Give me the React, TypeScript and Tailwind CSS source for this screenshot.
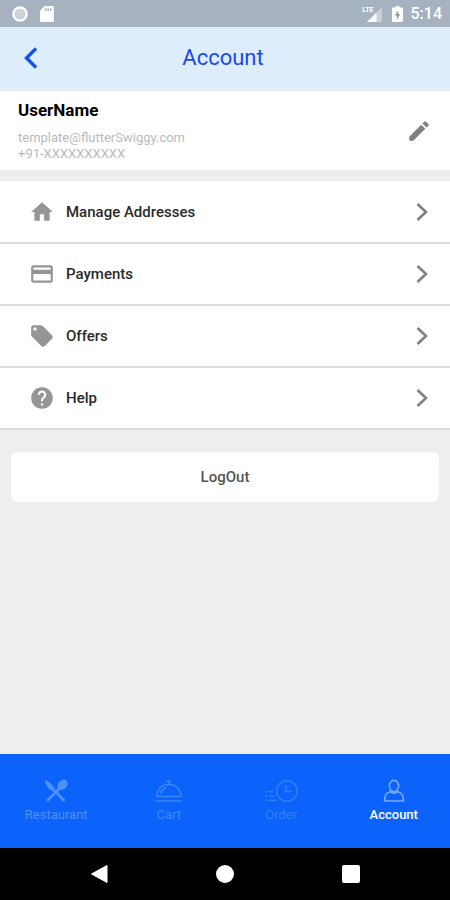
import type { ReactNode } from "react";
import {
    MdCreditCard,
    MdEdit,
    MdHelp,
    MdHome,
    MdLocalOffer,
} from "react-icons/md";

const menuItems = [
    { label: "Manage Addresses", icon: MdHome },
    { label: "Payments", icon: MdCreditCard },
    { label: "Offers", icon: MdLocalOffer },
    { label: "Help", icon: MdHelp },
];

function StatusBar() {
    return (
        <div className="flex h-[27px] items-center justify-between bg-[#a6b2bf] pr-2 pl-3 text-white">
            <div className="flex items-center gap-3">
                <svg className="size-4" viewBox="0 0 16 16" aria-hidden="true">
                    <circle cx="8" cy="8" r="5" fill="#cdd3da" />
                    <circle
                        cx="8"
                        cy="8"
                        r="6.5"
                        fill="none"
                        stroke="#fff"
                        strokeWidth="2.6"
                    />
                </svg>
                <svg
                    className="h-4 w-3.5"
                    viewBox="0 0 14 16"
                    aria-hidden="true"
                >
                    <path
                        d="M4.5 0h8a1.300 1.300 0 0 1 1.300 1.300v13.400a1.300 1.300 0 0 1-1.300 1.300H1.300A1.300 1.300 0 0 1 0 14.700V5z"
                        fill="#fff"
                    />
                    <path
                        d="M5 2.200h1.400v2.800H5zM7.500 2.200h1.400v2.800H7.500zM10 2.200h1.400v2.800H10z"
                        fill="#a6b2bf"
                    />
                </svg>
            </div>
            <div className="flex items-center">
                <div className="flex items-start">
                    <span className="text-[7px] leading-2 font-bold">LTE</span>
                    <svg
                        className="-ml-2 h-4 w-4"
                        viewBox="0 0 16 16"
                        aria-hidden="true"
                    >
                        <path d="M16 1v15H1z" fill="#fff" opacity="0.4" />
                        <path d="M10.500 6.500V16H1z" fill="#fff" />
                    </svg>
                </div>
                <svg
                    className="ml-2.5 h-4 w-[11px]"
                    viewBox="0 0 11 16"
                    aria-hidden="true"
                >
                    <path
                        d="M3.500 0h4v1.600h2.500a1 1 0 0 1 1 1V15a1 1 0 0 1-1 1H1a1 1 0 0 1-1-1V2.600a1 1 0 0 1 1-1h2.500z"
                        fill="#fff"
                    />
                    <path
                        d="M6.200 4.300 2.800 9.500h2v4L8.200 8.200h-2z"
                        fill="#8b97a4"
                    />
                </svg>
                <span className="ml-2 text-base leading-5 font-medium">
                    5:14
                </span>
            </div>
        </div>
    );
}

function Header() {
    return (
        <header className="grid h-[62px] grid-cols-[56px_1fr_60px] items-center bg-[#deedfc] text-[#1a49ea]">
            <button
                type="button"
                aria-label="Back"
                className="flex h-full items-center pl-6"
            >
                <svg
                    className="h-[22px] w-3.5"
                    viewBox="0 0 14 22"
                    fill="none"
                    stroke="#1251f0"
                    strokeWidth="3.400"
                >
                    <path d="M12 1.500 2.500 11l9.500 9.500" />
                </svg>
            </button>
            <h1 className="text-center text-[22px] leading-7">Account</h1>
        </header>
    );
}

function Profile() {
    return (
        <section className="flex h-[79px] items-center justify-between bg-white pr-[18px] pl-[18px]">
            <div>
                <h2 className="text-[17px] leading-5 font-bold text-black">
                    UserName
                </h2>
                <p className="mt-2.5 text-[13px] leading-4 text-[#bababa]">
                    template@flutterSwiggy.com
                    <br />
                    +91-XXXXXXXXXX
                </p>
            </div>
            <button type="button" aria-label="Edit profile">
                <MdEdit className="size-[26px] text-[#808080]" />
            </button>
        </section>
    );
}

function Menu() {
    return (
        <ul className="mt-[11px] bg-white pt-px">
            {menuItems.map(({ label, icon: Icon }) => (
                <li key={label}>
                    <button
                        type="button"
                        className="flex h-[62px] w-full items-center border-b-2 border-[#dcdcdc] pr-[22px] pl-[29px] text-left"
                    >
                        <Icon className="size-[26px] text-[#959595]" />
                        <span className="ml-[11px] flex-1 text-[15px] leading-5 font-medium text-[#2a2a2a]">
                            {label}
                        </span>
                        <svg
                            className="h-5 w-3"
                            viewBox="0 0 12 20"
                            fill="none"
                            stroke="#808080"
                            strokeWidth="2.600"
                            aria-hidden="true"
                        >
                            <path d="M1.500 2 10 10l-8.500 8" />
                        </svg>
                    </button>
                </li>
            ))}
        </ul>
    );
}

function RestaurantIcon() {
    return (
        <svg
            className="size-6"
            viewBox="0 0 24 24"
            fill="currentColor"
            aria-hidden="true"
        >
            <path d="M1 1c2.500.5 8.500 5.500 9.500 8.500L8 12C4.500 10 .5 5 1 1z" />
            <path
                d="m8 9 12.500 13M15 10 3 22"
                fill="none"
                stroke="currentColor"
                strokeWidth="2.600"
            />
            <ellipse
                cx="18.500"
                cy="5.800"
                rx="4.500"
                ry="5.800"
                transform="rotate(45 18.500 5.800)"
            />
        </svg>
    );
}

function CartIcon() {
    return (
        <svg
            className="h-6 w-7"
            viewBox="0 0 28 24"
            fill="none"
            stroke="currentColor"
            strokeWidth="1.500"
            aria-hidden="true"
        >
            <path d="M2 17.500C2 10 7 5.500 14 5.500s12 4.500 12 12zM1 22h26" />
            <path d="M11.500 2h5M14 2v3.500M5.500 14.500c.8-3.200 2.800-5 5.800-5.800" />
        </svg>
    );
}

function OrderIcon() {
    return (
        <svg
            className="h-6 w-[34px]"
            viewBox="0 0 34 24"
            fill="none"
            stroke="currentColor"
            strokeWidth="1.500"
            aria-hidden="true"
        >
            <circle cx="23" cy="12" r="10.300" />
            <path d="M22 6v6.500h6M1 12.500h2m2 0h5M1 17h2m2 0h6M1 21.500h2m2 0h8" />
        </svg>
    );
}

function AccountIcon() {
    return (
        <svg
            className="h-6 w-[22px]"
            viewBox="0 0 22 24"
            fill="none"
            stroke="currentColor"
            strokeWidth="1.600"
            strokeLinejoin="round"
            aria-hidden="true"
        >
            <ellipse cx="11" cy="7" rx="4.600" ry="5.600" />
            <path d="M7.500 12.500C3.500 14 1.700 15.500 1.500 22h19c-.2-6.500-2-8-6-9.500-1.500 2.300-5.500 2.300-7 0z" />
        </svg>
    );
}

type TabProps = {
    label: string;
    className: string;
    iconClassName?: string;
    children: ReactNode;
};

function Tab({ label, className, iconClassName, children }: TabProps) {
    return (
        <a
            href="#"
            className={`flex flex-1 flex-col items-center gap-1 pt-[25px] ${className}`}
        >
            <span className={iconClassName}>{children}</span>
            <span className="text-[13px] leading-4">{label}</span>
        </a>
    );
}

function TabBar() {
    return (
        <nav className="flex h-[94px] bg-[#0c63fc]">
            <Tab label="Restaurant" className="text-[#4f90ff]">
                <RestaurantIcon />
            </Tab>
            <Tab label="Cart" className="text-[#3f86ff]">
                <CartIcon />
            </Tab>
            <Tab label="Order" className="text-[#357dff]">
                <OrderIcon />
            </Tab>
            <Tab
                label="Account"
                className="font-medium text-white"
                iconClassName="text-[#79abff]"
            >
                <AccountIcon />
            </Tab>
        </nav>
    );
}

function SystemBar() {
    return (
        <div className="grid h-[52px] grid-cols-[1fr_20px_1fr] items-center bg-black px-[90px]">
            <button type="button" aria-label="System back">
                <svg className="h-5 w-[18px]" viewBox="0 0 18 20" fill="#fff">
                    <path
                        d="M17 1.500v17L1.500 10z"
                        stroke="#fff"
                        strokeLinejoin="round"
                    />
                </svg>
            </button>
            <button
                type="button"
                aria-label="Home screen"
                className="size-[18px] justify-self-center rounded-full bg-white"
            />
            <button
                type="button"
                aria-label="Recent apps"
                className="size-[18px] justify-self-end rounded-xs bg-white"
            />
        </div>
    );
}

export default function App() {
    return (
        <div className="flex min-h-screen flex-col bg-[#eeeeee] font-['Roboto',sans-serif]">
            <StatusBar />
            <Header />
            <main className="flex-1 pt-0.5">
                <Profile />
                <Menu />
                <div className="px-[11px] pt-[22px]">
                    <button
                        type="button"
                        className="h-[50px] w-full rounded-md bg-white text-[15px] leading-5 font-medium text-[#555555]"
                    >
                        LogOut
                    </button>
                </div>
            </main>
            <TabBar />
            <SystemBar />
        </div>
    );
}
